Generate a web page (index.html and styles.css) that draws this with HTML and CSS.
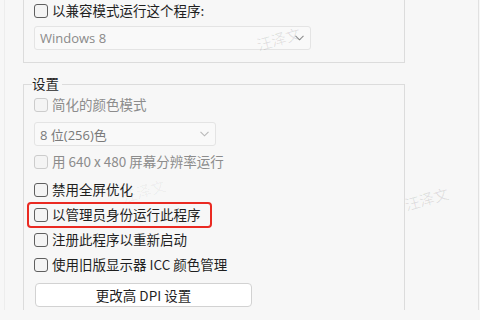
FILE: index.html
```html
<!DOCTYPE html>
<html lang="zh-CN">
<head>
<meta charset="utf-8">
<title>兼容性设置</title>
<link rel="stylesheet" href="styles.css">
</head>
<body>
<div class="frame">
  <div class="group g1">
    <div class="row"><span class="cb"></span><span class="lbl">以兼容模式运行这个程序:</span></div>
    <div class="select sel-win">
      <span class="val">Windows 8</span>
      <svg class="chev" width="9" height="6" viewBox="0 0 9 6"><path d="M0.5 0.8 L4.5 4.8 L8.5 0.8" fill="none" stroke="currentColor" stroke-width="1.1"/></svg>
    </div>
  </div>

  <div class="group g2">
    <div class="legend">设置</div>
    <div class="row disabled"><span class="cb"></span><span class="lbl">简化的颜色模式</span></div>
    <div class="select sel-color">
      <span class="val">8 位(256)色</span>
      <svg class="chev" width="9" height="6" viewBox="0 0 9 6"><path d="M0.5 0.8 L4.5 4.8 L8.5 0.8" fill="none" stroke="currentColor" stroke-width="1.1"/></svg>
    </div>
    <div class="row disabled r-res"><span class="cb"></span><span class="lbl">用 640 x 480 屏幕分辨率运行</span></div>
    <div class="row r-full"><span class="cb"></span><span class="lbl">禁用全屏优化</span></div>
    <div class="row highlight"><span class="cb"></span><span class="lbl">以管理员身份运行此程序</span></div>
    <div class="row"><span class="cb"></span><span class="lbl">注册此程序以重新启动</span></div>
    <div class="row"><span class="cb"></span><span class="lbl">使用旧版显示器 ICC 颜色管理</span></div>
    <div class="btn">更改高 DPI 设置</div>
  </div>

  <span class="wm wm1">汪泽文</span>
  <span class="wm wm2">汪泽文</span>
  <span class="wm wm3">汪泽文</span>
</div>
</body>
</html>
```
FILE: styles.css
```css
html, body {
  margin: 0;
  padding: 0;
  background: #f7f7f7;
  overflow: hidden;
}

body {
  font-family: "Noto Sans CJK SC", "Noto Sans", sans-serif;
  font-size: 13.5px;
  color: #1f1f1f;
}

.frame {
  position: relative;
  box-sizing: border-box;
  margin-left: 4px;
  width: 475px;
  height: 320px;
  border-left: 1px solid #ededed;
  border-right: 1px solid #e1e1e1;
  padding-left: 18px;
}

.group {
  box-sizing: border-box;
  width: 382px;
  border: 1px solid #dcdcdc;
  padding-left: 10px;
}

.g1 {
  margin-top: -10px;
  padding-top: 7px;
  padding-bottom: 12px;
}

.g2 {
  margin-top: 21px;
  padding-bottom: 11px;
}

.legend {
  display: table;
  margin: -11px 0 0 -2px;
  padding: 0 3px 0 0;
  line-height: 18px;
  background: #f7f7f7;
  color: #1f1f1f;
}

.row {
  position: relative;
  display: flex;
  align-items: center;
  height: 25px;
  line-height: 25px;
}

.cb {
  box-sizing: border-box;
  width: 14px;
  height: 14px;
  border: 1px solid #5f5f5f;
  border-radius: 3px;
  background: #f4f4f4;
  margin-right: 4px;
  flex: none;
}

.disabled .cb {
  border-color: #cccccc;
}

.disabled .lbl {
  color: #8c8c8c;
}

.select {
  box-sizing: border-box;
  display: flex;
  align-items: center;
  justify-content: space-between;
  height: 24px;
  margin-top: 3px;
  padding: 0 6px 0 5px;
  border: 1px solid #e4e4e4;
  border-radius: 3px;
  background: #f9f9f9;
}

.val {
  font-family: "Open Sans", "Noto Sans CJK SC", sans-serif;
  font-size: 13px;
  color: #8a8a8a;
}

.sel-win {
  width: 277px;
}

.sel-win .chev {
  color: #8e8e8e;
}

.sel-color {
  width: 182px;
  margin-top: 5px;
}

.sel-color .val {
  color: #7a7a7a;
}

.sel-color .chev {
  color: #b8b8b8;
}

.r-res {
  margin-top: 3px;
}

.r-full {
  margin-top: 3px;
}

.highlight::after {
  content: "";
  position: absolute;
  left: -7px;
  top: 0;
  width: 185px;
  height: 26px;
  box-sizing: border-box;
  border: 2.5px solid #ea2a22;
  border-radius: 4px;
}

.btn {
  box-sizing: border-box;
  width: 217px;
  height: 24px;
  margin-top: 6px;
  margin-left: 1px;
  border: 1px solid #d2d2d2;
  border-radius: 4px;
  background: #ffffff;
  text-align: center;
  line-height: 22px;
  color: #1f1f1f;
}

.wm {
  position: absolute;
  font-size: 15px;
  color: rgba(0, 0, 0, 0.1);
  transform: rotate(-16deg);
  pointer-events: none;
  white-space: nowrap;
}

.wm1 { left: 251px; top: 38px; }
.wm2 { left: 399px; top: 198px; }
.wm3 { left: 116px; top: 190px; color: rgba(0, 0, 0, 0.05); }
```
